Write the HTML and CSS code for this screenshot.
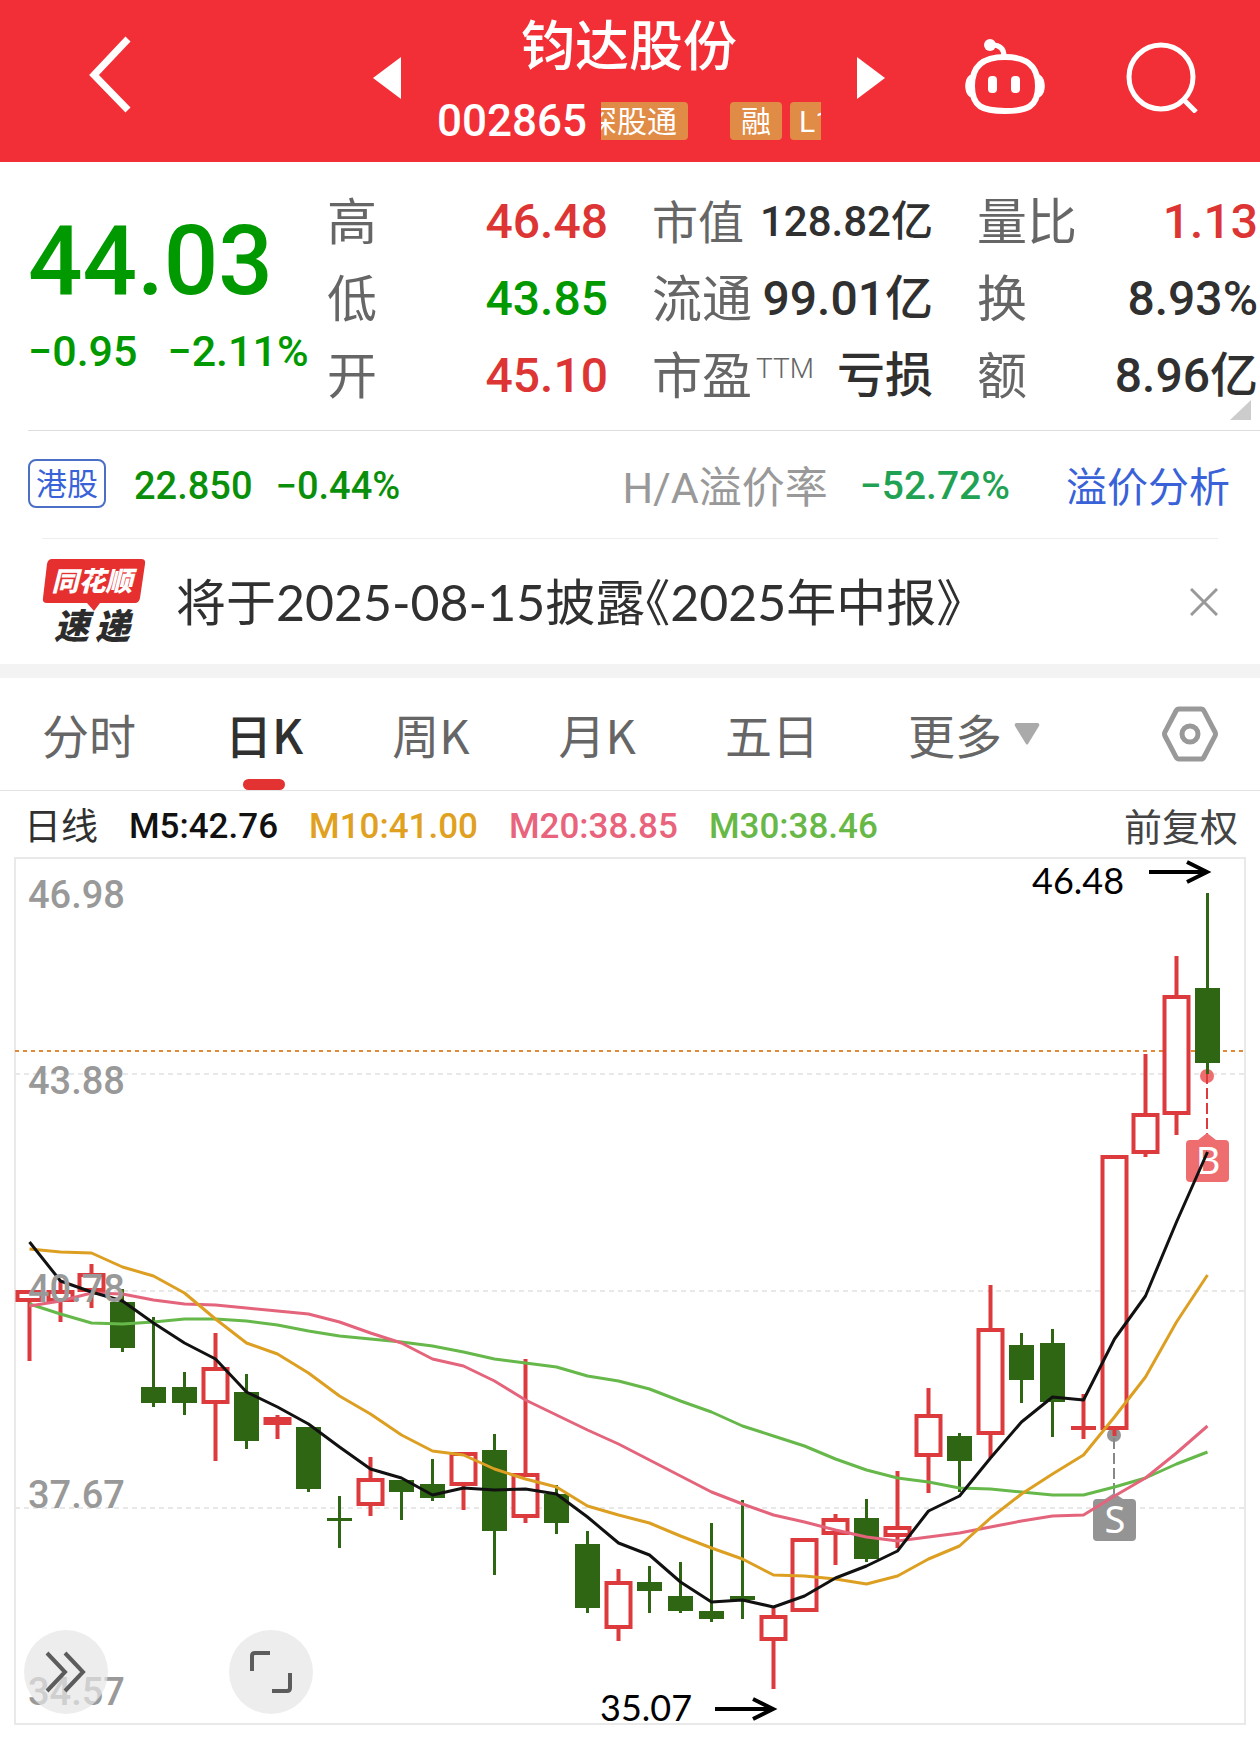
FILE: index.html
```html
<!DOCTYPE html>
<html lang="zh-CN">
<head>
<meta charset="utf-8">
<meta name="viewport" content="width=device-width, initial-scale=1">
<title>钧达股份 002865</title>
<link rel="stylesheet" href="styles.css">
</head>
<body>
<header class="topbar">
  <button class="icon-btn" type="button" aria-label="返回">
    <svg width="46" height="80" viewBox="0 0 46 80"><path d="M40 4 6 40l34 35" fill="none" stroke="#fff" stroke-width="7"/></svg>
  </button>
  <div class="stock-nav">
    <button class="icon-btn" type="button" aria-label="上一只">
      <svg width="28" height="42" viewBox="0 0 28 42"><path d="M28 0v42L0 21z" fill="#fff"/></svg>
    </button>
    <div class="stock">
      <h1 class="stock-name">钧达股份</h1>
      <div class="stock-meta">
        <span class="stock-code">002865</span>
        <div class="tags">
          <span class="tag tag-wide">深股通</span>
          <span class="tag">融</span>
          <span class="tag">L1</span>
        </div>
      </div>
    </div>
    <button class="icon-btn" type="button" aria-label="下一只">
      <svg width="28" height="42" viewBox="0 0 28 42"><path d="M0 0v42l28-21z" fill="#fff"/></svg>
    </button>
  </div>
  <div class="tools">
    <button class="icon-btn" type="button" aria-label="智能助手">
      <svg width="82" height="80" viewBox="0 0 82 80" fill="none" stroke="#fff">
        <path d="M40 19C40 11 35 8 28 8" stroke-width="5"/>
        <circle cx="26" cy="8" r="6" fill="#fff" stroke="none"/>
        <path d="M41 20c21 0 33 8 33 29S63 74 41 74 8 70 8 49s12-29 33-29z" stroke-width="6"/>
        <path d="M7 38C0 40 0 58 7 60zM75 38c7 2 7 20 0 22z" fill="#fff" stroke-width="1"/>
        <rect x="24" y="39" width="9" height="17" rx="4" fill="#fff" stroke="none"/>
        <rect x="47" y="39" width="9" height="17" rx="4" fill="#fff" stroke="none"/>
      </svg>
    </button>
    <button class="icon-btn" type="button" aria-label="搜索">
      <svg width="72" height="72" viewBox="0 0 72 72" fill="none" stroke="#fff" stroke-width="5"><circle cx="35" cy="36" r="32"/><path d="m58 59 12 12"/></svg>
    </button>
  </div>
</header>

<main>
<section class="quote">
  <div class="price-box">
    <div class="price">44.03</div>
    <div class="change"><span>−0.95</span><span>−2.11%</span></div>
  </div>
  <div class="stats">
    <dl class="stat-col">
      <div class="stat"><dt>高</dt><dd class="up">46.48</dd></div>
      <div class="stat"><dt>低</dt><dd class="down">43.85</dd></div>
      <div class="stat"><dt>开</dt><dd class="up">45.10</dd></div>
    </dl>
    <dl class="stat-col">
      <div class="stat stat-small"><dt>市值</dt><dd>128.82亿</dd></div>
      <div class="stat"><dt>流通</dt><dd>99.01亿</dd></div>
      <div class="stat"><dt>市盈<span class="ttm">TTM</span></dt><dd>亏损</dd></div>
    </dl>
    <dl class="stat-col">
      <div class="stat"><dt>量比</dt><dd class="up">1.13</dd></div>
      <div class="stat"><dt>换</dt><dd>8.93%</dd></div>
      <div class="stat"><dt>额</dt><dd>8.96亿</dd></div>
    </dl>
  </div>
  <svg class="corner" width="21" height="20" viewBox="0 0 21 20"><path d="M21 0v20H0z" fill="#ccc"/></svg>
</section>

<section class="hk">
  <span class="hk-badge">港股</span>
  <span class="hk-num">22.850</span>
  <span class="hk-num">−0.44%</span>
  <span class="hk-label">H/A溢价率</span>
  <span class="hk-premium">−52.72%</span>
  <a class="hk-link" href="#premium">溢价分析</a>
</section>

<section class="news">
  <svg class="news-logo" width="104" height="90" viewBox="0 0 104 90" role="img" aria-label="同花顺速递">
    <path d="M10 2h89q5 0 4 5l-5 34q-1 5-5 5H58l-6 8-7-8H5q-5 0-4-5L5 7q1-5 5-5z" fill="#e5302f"/>
    <text class="logo-a" x="50" y="34" text-anchor="middle">同花顺</text>
    <text class="logo-b" x="12" y="82">速</text>
    <text class="logo-b" x="53" y="82">递</text>
  </svg>
  <a class="news-title" href="#report">将于2025-08-15披露《2025年中报》</a>
  <button class="icon-btn" type="button" aria-label="关闭">
    <svg width="28" height="28" viewBox="0 0 28 28"><path d="m1 1 26 26M27 1 1 27" stroke="#999" stroke-width="3"/></svg>
  </button>
</section>

<nav class="tabs" aria-label="周期">
  <button class="tab" type="button">分时</button>
  <button class="tab active" type="button" aria-current="true">日K</button>
  <button class="tab" type="button">周K</button>
  <button class="tab" type="button">月K</button>
  <button class="tab" type="button">五日</button>
  <button class="tab tab-more" type="button">更多<svg width="26" height="22" viewBox="0 0 26 22"><path d="M2 0h22q2 1 1 3L14 21q-1 1-2 0L1 3Q0 1 2 0z" fill="#aaa"/></svg></button>
  <button class="icon-btn settings" type="button" aria-label="设置">
    <svg width="56" height="56" viewBox="0 0 56 56" fill="none" stroke="#999" stroke-width="5" stroke-linejoin="round"><path d="M17 3h22q2 0 3 2l11 21q1 2 0 4L42 51q-1 2-3 2H17q-2 0-3-2L3 30q-1-2 0-4L14 5q1-2 3-2z"/><circle cx="28" cy="28" r="8"/></svg>
  </button>
</nav>

<section class="legend">
  <span class="legend-name">日线</span>
  <span class="ma5">M5:42.76</span>
  <span class="ma10">M10:41.00</span>
  <span class="ma20">M20:38.85</span>
  <span class="ma30">M30:38.46</span>
  <button class="adjust" type="button">前复权</button>
</section>

<section class="chart">
  <svg class="chart-svg" viewBox="0 857 1260 881" role="img" aria-label="日K线图">
    <rect x="15" y="858" width="1230" height="866" fill="none" stroke="#e9e9e9" stroke-width="2"/>
    <g stroke="#e8e8e8" stroke-width="2" stroke-dasharray="5 4"><path d="M15 1074H1245M15 1291H1245M15 1508H1245"/></g>
    <path d="M15 1051H1245" stroke="#e08a35" stroke-width="2" stroke-dasharray="4 4"/>
    <g class="marker">
      <circle cx="1207" cy="1076" r="7" fill="#ee6e70"/>
      <path d="M1207 1073v62" stroke="#dd3a3c" stroke-width="2" stroke-dasharray="11 4"/>
      <path d="M1190 1140h8l9-7 9 7h9q4 0 4 4v34q0 4-4 4h-35q-4 0-4-4v-34q0-4 4-4z" fill="#ee6e70"/>
      <text x="1208" y="1174" text-anchor="middle">B</text>
      <circle cx="1114" cy="1435" r="7" fill="#949494"/>
      <path d="M1114 1438v56" stroke="#888" stroke-width="2" stroke-dasharray="11 4"/>
      <path d="M1097 1499h8l9-6 9 6h9q4 0 4 4v34q0 4-4 4h-35q-4 0-4-4v-34q0-4 4-4z" fill="#949494"/>
      <text x="1115" y="1533" text-anchor="middle">S</text>
    </g>
    <g id="candles"></g>
    <g id="averages" fill="none" stroke-width="3" stroke-linejoin="round"></g>
    <g class="axis">
      <text x="28" y="908">46.98</text>
      <text x="28" y="1094">43.88</text>
      <text x="28" y="1302">40.78</text>
      <text x="28" y="1508">37.67</text>
      <text x="28" y="1705">34.57</text>
    </g>
    <g class="extreme">
      <text x="1032" y="894">46.48</text>
      <path d="M1149 872h57M1187 862l20 10-20 10"/>
      <text x="600" y="1721">35.07</text>
      <path d="M715 1709h57M753 1699l20 10-20 10"/>
    </g>
  </svg>
  <div class="chart-tools">
    <button class="round" type="button" aria-label="展开">
      <svg width="42" height="42" viewBox="0 0 42 42"><path d="m2 2 18 19L2 40M20 2l18 19-18 19" fill="none" stroke="#5c5c5c" stroke-width="4"/></svg>
    </button>
    <button class="round" type="button" aria-label="全屏">
      <svg width="44" height="44" viewBox="0 0 44 44"><path d="M21 3H6q-3 0-3 3v15M23 41h15q3 0 3-3V23" fill="none" stroke="#5c5c5c" stroke-width="4"/></svg>
    </button>
  </div>
</section>
</main>
<script src="chart.js"></script>
</body>
</html>
```
FILE: styles.css
```css
* { box-sizing: border-box; }
body {
  margin: 0;
  background: #fff;
  color: #303030;
  font-family: Roboto, "Noto Sans CJK SC", sans-serif;
}
button {
  margin: 0;
  padding: 0;
  border: 0;
  background: none;
  color: inherit;
  font: inherit;
}
a { color: inherit; text-decoration: none; }
svg { display: block; flex: none; }
h1, dl, dd { margin: 0; }
.icon-btn { flex: none; }

.topbar {
  display: flex;
  align-items: center;
  gap: 79px;
  height: 162px;
  padding: 0 62px 0 88px;
  background: #f22f37;
  color: #fff;
}
.topbar > .icon-btn { padding-bottom: 12px; }
.stock-nav {
  display: flex;
  align-items: center;
  gap: 36px;
  margin-left: auto;
}
.stock-nav > .icon-btn { padding-bottom: 6px; }
.stock { width: 384px; padding-top: 8px; }
.stock-name {
  font-size: 54px;
  line-height: 72px;
  font-weight: 500;
  text-align: center;
}
.stock-meta {
  display: flex;
  align-items: center;
  gap: 14px;
}
.stock-code {
  font-size: 44px;
  line-height: 74px;
  font-weight: 500;
}
.tags {
  display: flex;
  flex: 1;
  justify-content: flex-end;
  gap: 8px;
  overflow: hidden;
}
.tag {
  flex: none;
  height: 38px;
  padding: 0 11px;
  border-radius: 4px;
  background: #e08b46;
  font-size: 30px;
  line-height: 40px;
}
.tag:last-child { margin-right: -22px; padding-left: 9px; }
.tag-wide { margin-right: 34px; }
.tools {
  display: flex;
  align-items: center;
  gap: 80px;
  padding-bottom: 8px;
}

.quote {
  position: relative;
  display: flex;
  padding: 21px 2px 17px 28px;
}
.quote::after {
  content: "";
  position: absolute;
  left: 28px;
  right: 0;
  bottom: 0;
  border-bottom: 1px solid #ddd;
}
.price-box { flex: none; width: 299px; padding-top: 28px; color: #090; }
.price { font-size: 96px; line-height: 100px; font-weight: 500; }
.change {
  display: flex;
  gap: 30px;
  padding-top: 10px;
  font-size: 43px;
  line-height: 60px;
  font-weight: 500;
  white-space: nowrap;
}
.stats {
  display: grid;
  flex: 1;
  grid-template-columns: repeat(3, 1fr);
  column-gap: 44px;
}
.stat {
  display: flex;
  justify-content: space-between;
  height: 77px;
  font-size: 48px;
  line-height: 77px;
  white-space: nowrap;
}
.stat dt { display: flex; padding-top: 2px; color: #666; font-size: 50px; }
.stat dd { font-weight: 500; }
.stat-small { font-size: 42px; }
.stat-small dt { font-size: 46px; }
.ttm { padding-left: 4px; font-size: 28px; line-height: 60px; font-weight: 300; }
.stat .up { color: #dd3434; }
.stat .down { color: #090; }
.corner { position: absolute; right: 9px; bottom: 11px; }

.hk {
  display: flex;
  align-items: center;
  height: 107px;
  padding: 0 30px 2px 28px;
  font-size: 38px;
  font-weight: 500;
  white-space: nowrap;
}
.hk-badge {
  height: 49px;
  margin-right: 28px;
  padding: 0 6px;
  border: 2px solid #4a6fc4;
  border-radius: 8px;
  color: #3a62d8;
  font-size: 31px;
  line-height: 48px;
  font-weight: 400;
}
.hk-num, .hk-premium { padding-top: 4px; }
.hk-num { margin-right: 23px; color: #0a8f0a; }
.hk-label {
  margin-left: auto;
  color: #999;
  font-size: 43px;
  font-weight: 400;
}
.hk-premium { margin: 0 56px 0 32px; color: #1fa253; font-size: 39px; }
.hk-link { color: #3a62d8; font-size: 41px; font-weight: 400; }

.news {
  display: flex;
  align-items: center;
  height: 126px;
  margin: 0 42px;
  border-top: 1px solid #eee;
}
.news-logo { margin-right: 30px; }
.logo-a, .logo-b { font-family: "Noto Sans CJK SC", sans-serif; font-weight: 900; font-style: italic; }
.logo-a { fill: #fff; font-size: 27px; }
.logo-b { fill: #2c2c2c; font-size: 35px; }
.news-title {
  flex: 1;
  font-family: Lato, "Noto Sans CJK SC", sans-serif;
  font-feature-settings: "halt";
  font-size: 50px;
  line-height: 60px;
  white-space: nowrap;
}

.tabs {
  display: flex;
  align-items: center;
  gap: 89px;
  height: 127px;
  padding: 0 42px;
  border-top: 14px solid #f3f3f3;
  border-bottom: 1px solid #e3e3e3;
  color: #666;
  font-family: "Noto Sans CJK SC", sans-serif;
  font-size: 47px;
  white-space: nowrap;
}
.tab { position: relative; height: 112px; line-height: 112px; }
.tab.active { color: #303030; font-weight: 500; }
.tab.active::after {
  content: "";
  position: absolute;
  left: 50%;
  bottom: 0;
  width: 42px;
  height: 11px;
  margin-left: -21px;
  border-radius: 6px;
  background: #e23232;
}
.tab-more { display: flex; align-items: center; gap: 12px; }
.settings { margin-left: auto; }

.legend {
  display: flex;
  align-items: center;
  gap: 31px;
  height: 66px;
  padding: 4px 22px 0 24px;
  font-size: 35px;
  font-weight: 500;
  white-space: nowrap;
}
.legend-name { font-size: 37px; font-weight: 400; }
.legend-name, .adjust { padding-bottom: 4px; }
.ma5 { color: #111; }
.ma10 { color: #e0a020; }
.ma20 { color: #e8637b; }
.ma30 { color: #68b847; }
.adjust { margin-left: auto; font-size: 38px; font-weight: 400; color: #444; }

.chart { position: relative; }
.chart-svg { width: 100%; height: auto; }
.axis text { fill: #999; font-size: 38px; font-weight: 500; }
.marker text { fill: #fff; font-family: "Noto Sans", sans-serif; font-size: 38px; }
.extreme text { fill: #000; font-family: Lato, sans-serif; font-size: 36px; }
.extreme path { fill: none; stroke: #000; stroke-width: 4px; }
.chart-tools {
  position: absolute;
  left: 24px;
  bottom: 24px;
  display: flex;
  gap: 121px;
}
.round {
  display: flex;
  align-items: center;
  justify-content: center;
  width: 84px;
  height: 84px;
  border-radius: 50%;
  background: rgba(230, 230, 230, 0.7);
}
```
FILE: chart.js
```js
// Each row: colour (r = rise, g = fall), body top, body bottom, high, low.
const candles = [
  ["r", 1290, 1302, 1290, 1361], ["r", 1290, 1302, 1280, 1322], ["r", 1273, 1292, 1264, 1308],
  ["g", 1302, 1348, 1289, 1352], ["g", 1387, 1403, 1317, 1407], ["g", 1387, 1403, 1372, 1415],
  ["r", 1367, 1404, 1333, 1461], ["g", 1392, 1441, 1374, 1449], ["r", 1417, 1425, 1415, 1439],
  ["g", 1427, 1489, 1427, 1492], ["g", 1518, 1521, 1496, 1548], ["r", 1478, 1506, 1457, 1516],
  ["g", 1480, 1492, 1480, 1520], ["g", 1484, 1498, 1459, 1501], ["r", 1452, 1486, 1452, 1510],
  ["g", 1450, 1531, 1434, 1575], ["r", 1473, 1518, 1359, 1523], ["g", 1494, 1523, 1485, 1534],
  ["g", 1544, 1608, 1531, 1613], ["r", 1581, 1629, 1569, 1641], ["g", 1582, 1591, 1566, 1613],
  ["g", 1596, 1611, 1562, 1613], ["g", 1611, 1619, 1523, 1622], ["g", 1596, 1600, 1500, 1619],
  ["r", 1615, 1641, 1608, 1689], ["r", 1538, 1612, 1538, 1612], ["r", 1518, 1535, 1514, 1565],
  ["g", 1518, 1559, 1499, 1562], ["r", 1526, 1537, 1471, 1548], ["r", 1414, 1457, 1388, 1493],
  ["g", 1436, 1461, 1433, 1492], ["r", 1328, 1435, 1285, 1458], ["g", 1345, 1380, 1333, 1403],
  ["g", 1343, 1402, 1329, 1437], ["r", 1426, 1430, 1394, 1439], ["r", 1155, 1430, 1155, 1436],
  ["r", 1113, 1154, 1054, 1157], ["r", 995, 1115, 956, 1135], ["g", 988, 1063, 893, 1074]
];

const averages = {
  "#66b84a": [1304, 1314, 1323, 1324, 1322, 1319, 1319, 1321, 1325, 1331, 1336, 1339, 1342, 1346, 1352, 1359, 1363, 1367, 1376, 1381, 1389, 1401, 1412, 1426, 1436, 1446, 1459, 1470, 1478, 1482, 1488, 1489, 1492, 1495, 1495, 1487, 1478, 1464, 1452],
  "#e4647c": [1306, 1301, 1293, 1294, 1300, 1304, 1305, 1308, 1311, 1314, 1322, 1333, 1343, 1359, 1366, 1381, 1400, 1415, 1430, 1444, 1460, 1476, 1492, 1504, 1515, 1522, 1530, 1537, 1541, 1537, 1533, 1527, 1521, 1516, 1515, 1496, 1478, 1453, 1426],
  "#dd9f22": [1249, 1252, 1253, 1267, 1276, 1293, 1319, 1343, 1354, 1373, 1396, 1414, 1435, 1451, 1455, 1469, 1479, 1487, 1506, 1515, 1523, 1536, 1548, 1559, 1575, 1576, 1579, 1584, 1576, 1559, 1546, 1518, 1494, 1474, 1455, 1417, 1377, 1322, 1275],
  "#111": [1242, 1281, 1292, 1301, 1323, 1343, 1359, 1392, 1407, 1424, 1447, 1469, 1478, 1495, 1488, 1490, 1489, 1494, 1517, 1543, 1555, 1582, 1602, 1600, 1607, 1596, 1578, 1566, 1551, 1511, 1496, 1458, 1422, 1397, 1400, 1339, 1296, 1222, 1152]
};

const centre = i => 29.5 + 31 * i;

function add(parent, name, attrs) {
  const node = document.createElementNS("http://www.w3.org/2000/svg", name);
  for (const key in attrs) node.setAttribute(key, attrs[key]);
  parent.append(node);
}

const candleGroup = document.getElementById("candles");
candles.forEach(([kind, top, bottom, high, low], i) => {
  const x = centre(i);
  const rise = kind === "r";
  const color = rise ? "#dc3a3c" : "#2f6613";
  const wick = rise ? 4 : 3;
  const width = rise && bottom - top > 4 ? 28 : 25;
  add(candleGroup, "rect", { x: x - wick / 2, y: high, width: wick, height: low - high, fill: color });
  if (rise && bottom - top > 8) {
    add(candleGroup, "rect", {
      x: x - width / 2 + 2, y: top + 2, width: width - 4, height: bottom - top - 4,
      fill: "#fff", stroke: color, "stroke-width": 4
    });
  } else {
    add(candleGroup, "rect", { x: x - width / 2, y: top, width, height: bottom - top, fill: color });
  }
});

const averageGroup = document.getElementById("averages");
for (const color in averages) {
  add(averageGroup, "polyline", {
    points: averages[color].map((y, i) => `${centre(i)},${y}`).join(" "),
    stroke: color
  });
}
```
